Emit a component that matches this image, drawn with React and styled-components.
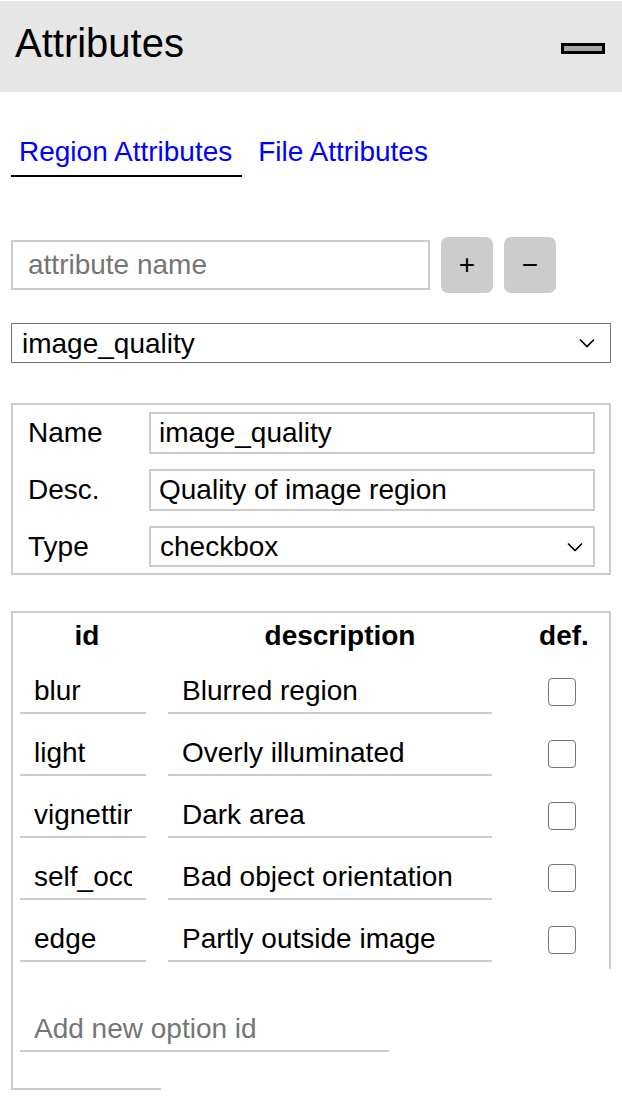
import styled, { createGlobalStyle } from "styled-components";

const GlobalStyle = createGlobalStyle`
  body {
    margin: 0;
    background: #fff;
    font-family: "Liberation Sans", Arial, sans-serif;
    color: #000;
  }
  * {
    box-sizing: border-box;
  }
`;

const options = [
  { id: "blur", desc: "Blurred region" },
  { id: "light", desc: "Overly illuminated" },
  { id: "vignetting", desc: "Dark area" },
  { id: "self_occluded", desc: "Bad object orientation" },
  { id: "edge", desc: "Partly outside image" },
];

function ChevronDown({ right }) {
  return (
    <Chevron $right={right} width="16" height="9" viewBox="0 0 16 9">
      <path d="M1 1 L8 8 L15 1" fill="none" stroke="#000" strokeWidth="1.6" />
    </Chevron>
  );
}

function App() {
  return (
    <>
      <GlobalStyle />
      <Panel>
        <Header>
          <Title>Attributes</Title>
          <MinimizeIcon />
        </Header>

        <Content>
          <TabBar>
            <Tab $active>Region Attributes</Tab>
            <Tab>File Attributes</Tab>
          </TabBar>

          <NewAttrRow>
            <TextBox placeholder="attribute name" />
            <SquareButton>+</SquareButton>
            <SquareButton>−</SquareButton>
          </NewAttrRow>

          <SelectWrap $top={30}>
            <AttrSelect defaultValue="image_quality">
              <option value="image_quality">image_quality</option>
            </AttrSelect>
            <ChevronDown right={16} />
          </SelectWrap>

          <PropsBox>
            <Label>Name</Label>
            <PropInput defaultValue="image_quality" />
            <Label>Desc.</Label>
            <PropInput defaultValue="Quality of image region" />
            <Label>Type</Label>
            <SelectWrap>
              <PropSelect defaultValue="checkbox">
                <option value="checkbox">checkbox</option>
              </PropSelect>
              <ChevronDown right={12} />
            </SelectWrap>
          </PropsBox>

          <OptionsBox>
            <OptionsTable>
              <HeadCell>id</HeadCell>
              <HeadCell>description</HeadCell>
              <HeadCell>def.</HeadCell>
              {options.map((o) => (
                <OptionRow key={o.id}>
                  <LineInput $width={126} defaultValue={o.id} />
                  <LineInput $width={324} defaultValue={o.desc} />
                  <Check type="checkbox" />
                </OptionRow>
              ))}
            </OptionsTable>
            <AddOption>
              <LineInput $width={369} placeholder="Add new option id" />
            </AddOption>
          </OptionsBox>
        </Content>
      </Panel>
    </>
  );
}

export default App;

const Panel = styled.div`
  width: 622px;
`;

const Header = styled.div`
  margin-top: 1px;
  height: 91px;
  background: #e6e6e6;
  display: flex;
  justify-content: space-between;
  align-items: flex-start;
  padding: 19px 17px 0 15px;
`;

const Title = styled.div`
  font-size: 40px;
  line-height: 46px;
`;

const MinimizeIcon = styled.div`
  margin-top: 23px;
  width: 44px;
  height: 11px;
  background: #a6a6a6;
  border: 3px solid #000;
`;

const Content = styled.div`
  padding: 0 11px;
`;

const TabBar = styled.div`
  display: flex;
  gap: 8px;
  margin-top: 40px;
`;

const Tab = styled.div`
  font-size: 28px;
  line-height: 32px;
  color: #0000ff;
  padding: 4px 10px 7px 8px;
  border-bottom: 2px solid ${(p) => (p.$active ? "#000" : "transparent")};
  cursor: pointer;
`;

const NewAttrRow = styled.div`
  display: flex;
  align-items: center;
  gap: 11px;
  margin-top: 60px;
`;

const TextBox = styled.input`
  width: 419px;
  height: 50px;
  border: 2px solid #ccc;
  padding: 0 15px;
  font-family: inherit;
  font-size: 28px;
  outline: none;
  &::placeholder {
    color: #757575;
  }
`;

const SquareButton = styled.button`
  width: 52px;
  height: 56px;
  border: none;
  border-radius: 7px;
  background: #ccc;
  font-family: inherit;
  font-size: 28px;
  color: #000;
  padding: 0;
`;

const SelectWrap = styled.div`
  position: relative;
  margin-top: ${(p) => p.$top || 0}px;
`;

const Chevron = styled.svg`
  position: absolute;
  right: ${(p) => p.$right}px;
  top: 50%;
  transform: translateY(-50%);
  pointer-events: none;
`;

const AttrSelect = styled.select`
  display: block;
  appearance: none;
  width: 600px;
  height: 40px;
  border: 1px solid #767676;
  border-radius: 0;
  background: #fff;
  font-family: inherit;
  font-size: 28px;
  padding: 0 6px 0 10px;
  color: #000;
`;

const PropsBox = styled.div`
  margin-top: 40px;
  border: 2px solid #ccc;
  padding: 7px 14px 6px 15px;
  display: grid;
  grid-template-columns: 121px 1fr;
  row-gap: 15px;
  align-items: center;
`;

const Label = styled.div`
  font-size: 28px;
`;

const PropInput = styled.input`
  width: 100%;
  height: 42px;
  border: 2px solid #ccc;
  padding: 0 8px;
  font-family: inherit;
  font-size: 28px;
  color: #000;
  outline: none;
`;

const PropSelect = styled.select`
  display: block;
  appearance: none;
  width: 100%;
  height: 41px;
  border: 2px solid #ccc;
  border-radius: 0;
  background: #fff;
  padding: 0 6px 0 9px;
  font-family: inherit;
  font-size: 28px;
  color: #000;
`;

const OptionsBox = styled.div`
  margin-top: 36px;
  width: 600px;
  border-top: 2px solid #ccc;
  border-left: 2px solid #ccc;

  &::after {
    content: "";
    display: block;
    width: 150px;
    height: 2px;
    margin-left: -2px;
    background: #ccc;
  }
`;

const OptionsTable = styled.div`
  display: grid;
  grid-template-columns: 148px 358px 1fr;
  row-gap: 18px;
  padding: 7px 0 7px;
  border-right: 2px solid #ccc;
`;

const HeadCell = styled.div`
  font-size: 28px;
  font-weight: bold;
  line-height: 32px;
  text-align: center;
`;

const OptionRow = styled.div`
  display: contents;
`;

const LineInput = styled.input`
  width: ${(p) => p.$width}px;
  height: 44px;
  margin-left: 7px;
  border: none;
  border-bottom: 2px solid #ccc;
  padding: 0 14px;
  font-family: inherit;
  font-size: 28px;
  color: #000;
  background: transparent;
  outline: none;
  &::placeholder {
    color: #757575;
  }
`;

const Check = styled.input`
  appearance: none;
  justify-self: center;
  align-self: center;
  width: 28px;
  height: 28px;
  margin: 0 4px 0 0;
  border: 1px solid #767676;
  border-radius: 4px;
  background: #fff;
`;

const AddOption = styled.div`
  padding: 39px 0 36px;
`;
